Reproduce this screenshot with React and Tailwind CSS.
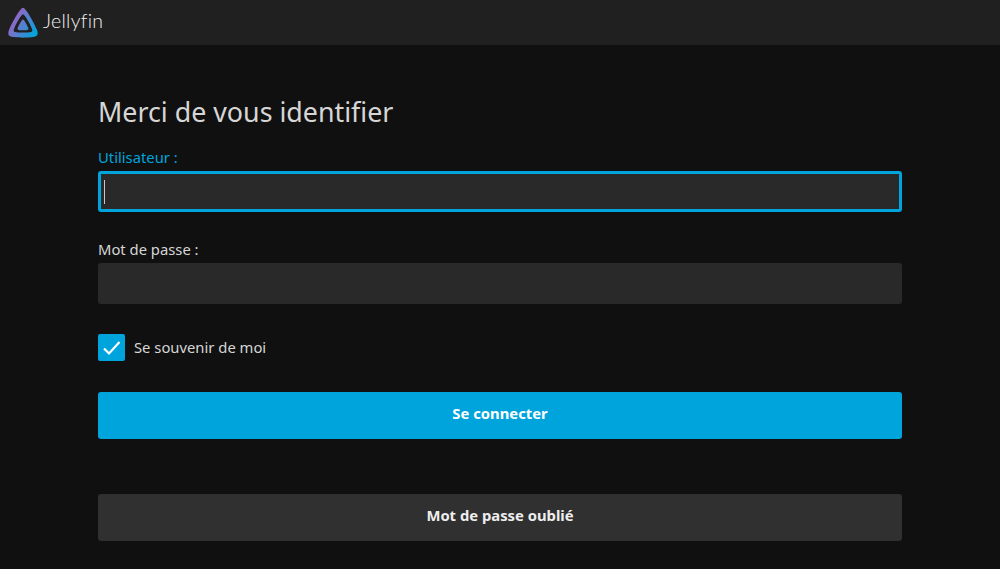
import { useState } from "react";

function Logo() {
  return (
    <svg width="32" height="32" viewBox="0 0 32 32" fill="none">
      <defs>
        <linearGradient id="jf" x1="3" y1="10" x2="29" y2="26" gradientUnits="userSpaceOnUse">
          <stop offset="0" stopColor="#aa5cc3" />
          <stop offset="1" stopColor="#00a4dc" />
        </linearGradient>
      </defs>
      <path
        fillRule="evenodd"
        d="M16 0.8C13.5 0.8 6 14 2.4 22 0.4 26.6 1.2 28.6 4 29.6 8 31 24 31 28 29.6 30.8 28.6 31.6 26.6 29.6 22 26 14 18.5 0.8 16 0.8ZM16 7.2C17.6 7.2 22.4 15.8 24.8 21.4 25.8 23.8 25.4 24.6 23.8 25 21 25.8 11 25.8 8.2 25 6.6 24.6 6.2 23.8 7.2 21.4 9.6 15.8 14.4 7.2 16 7.2Z"
        fill="url(#jf)"
      />
      <path
        d="M16 12.4C15 12.4 12 17.6 10.8 20.6 10.2 22 10.6 22.6 11.6 22.9 13.2 23.4 18.8 23.4 20.4 22.9 21.4 22.6 21.8 22 21.2 20.6 20 17.6 17 12.4 16 12.4Z"
        fill="url(#jf)"
      />
    </svg>
  );
}

export default function App() {
  const [remember, setRemember] = useState(true);

  return (
    <div className="min-h-screen bg-[#101010] font-['Noto_Sans',sans-serif] text-[#d6d6d6]">
      {/* top bar */}
      <header className="flex h-[45px] items-center gap-[4px] bg-[#202020] pl-[7px]">
        <Logo />
        <span className="pb-[3px] font-['Lato',sans-serif] text-[19.5px] font-light tracking-[0.3px] text-[#f0f0f0]">Jellyfin</span>
      </header>

      <main className="mx-[98px] flex flex-col pt-[48px]">
        <h1 className="text-[26.8px] leading-[38px] font-normal">Merci de vous identifier</h1>

        <label className="mt-[16px] text-[14.8px] leading-[20px] text-[#00a4dc]">Utilisateur :</label>
        <div className="mt-[4px] flex h-[41px] items-center rounded-[3px] border-[3px] border-[#00a4dc] bg-[#292929] px-[3px]">
          <span className="h-[24px] w-px bg-[#c8c8c8]" />
        </div>

        <label className="mt-[27px] text-[14.8px] leading-[20px]">Mot de passe :</label>
        <div className="mt-[4px] h-[41px] rounded-[3px] bg-[#292929]" />

        <label className="mt-[30px] flex items-center gap-[9px] text-[14.8px]">
          <button
            type="button"
            onClick={() => setRemember(!remember)}
            className="flex h-[27px] w-[27px] items-center justify-center rounded-[2px] bg-[#00a4dc]"
          >
            {remember && (
              <svg width="19" height="19" viewBox="0 0 19 19" fill="none">
                <path d="M2 10.5 7 15.5 17.5 4" stroke="white" strokeWidth="2.2" />
              </svg>
            )}
          </button>
          Se souvenir de moi
        </label>

        <button type="button" className="mt-[31px] h-[47px] rounded-[3px] bg-[#00a4dc] pb-[5px] text-[14.8px] font-bold text-white">
          Se connecter
        </button>
        <button type="button" className="mt-[55px] h-[47px] rounded-[3px] bg-[#303030] pb-[5px] text-[14.8px] font-bold text-[#eeeeee]">
          Mot de passe oublié
        </button>
      </main>
    </div>
  );
}
